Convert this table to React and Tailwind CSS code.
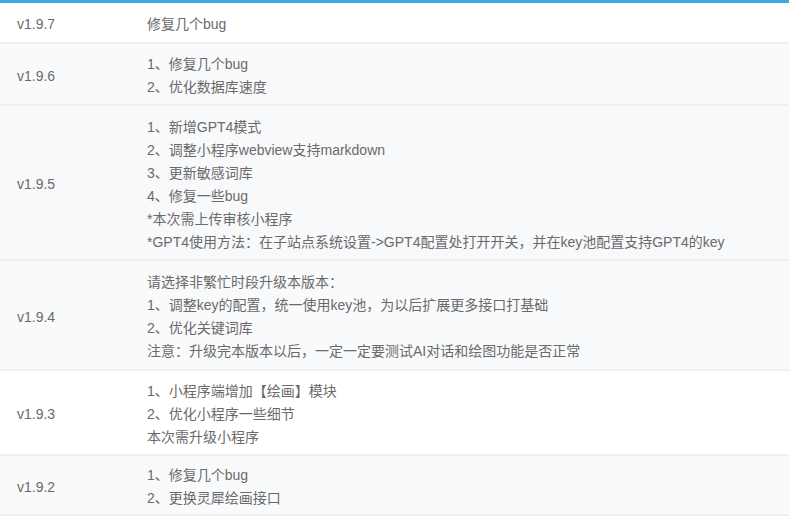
const rows = [
  { v: "v1.9.7", h: "h-[41px]", bg: "bg-white", lines: ["修复几个bug"] },
  { v: "v1.9.6", h: "h-[62px]", bg: "bg-[#f9fafb]", lines: ["1、修复几个bug", "2、优化数据库速度"] },
  {
    v: "v1.9.5",
    h: "h-[155px]",
    bg: "bg-[#f8f9fb]",
    lines: [
      "1、新增GPT4模式",
      "2、调整小程序webview支持markdown",
      "3、更新敏感词库",
      "4、修复一些bug",
      "*本次需上传审核小程序",
      "*GPT4使用方法：在子站点系统设置->GPT4配置处打开开关，并在key池配置支持GPT4的key",
    ],
  },
  {
    v: "v1.9.4",
    h: "h-[110px]",
    bg: "bg-[#f9fafb]",
    lines: [
      "请选择非繁忙时段升级本版本：",
      "1、调整key的配置，统一使用key池，为以后扩展更多接口打基础",
      "2、优化关键词库",
      "注意：升级完本版本以后，一定一定要测试AI对话和绘图功能是否正常",
    ],
  },
  {
    v: "v1.9.3",
    h: "h-[85px]",
    bg: "bg-white",
    lines: ["1、小程序端增加【绘画】模块", "2、优化小程序一些细节", "本次需升级小程序"],
  },
  { v: "v1.9.2", h: "h-[60px]", bg: "bg-[#f9fafb]", lines: ["1、修复几个bug", "2、更换灵犀绘画接口"] },
];

export default function App() {
  return (
    <div
      className="w-[789px] h-[519px] overflow-hidden bg-white text-[14px] text-[#6a6a6a]"
      style={{ fontFamily: '"Liberation Sans", "Noto Sans CJK SC", Arial, sans-serif' }}
    >
      <div className="h-[3px] bg-[#3da7de]" />
      {rows.map((r) => (
        <div key={r.v} className={`flex items-center pt-[4px] border-b-2 border-[#eeeff1] ${r.h} ${r.bg}`}>
          <div className="w-[147px] shrink-0 pl-[17px]">{r.v}</div>
          <div className="flex flex-col leading-[23px]">
            {r.lines.map((l, i) => (
              <div key={i} className="whitespace-nowrap">{l}</div>
            ))}
          </div>
        </div>
      ))}
    </div>
  );
}
